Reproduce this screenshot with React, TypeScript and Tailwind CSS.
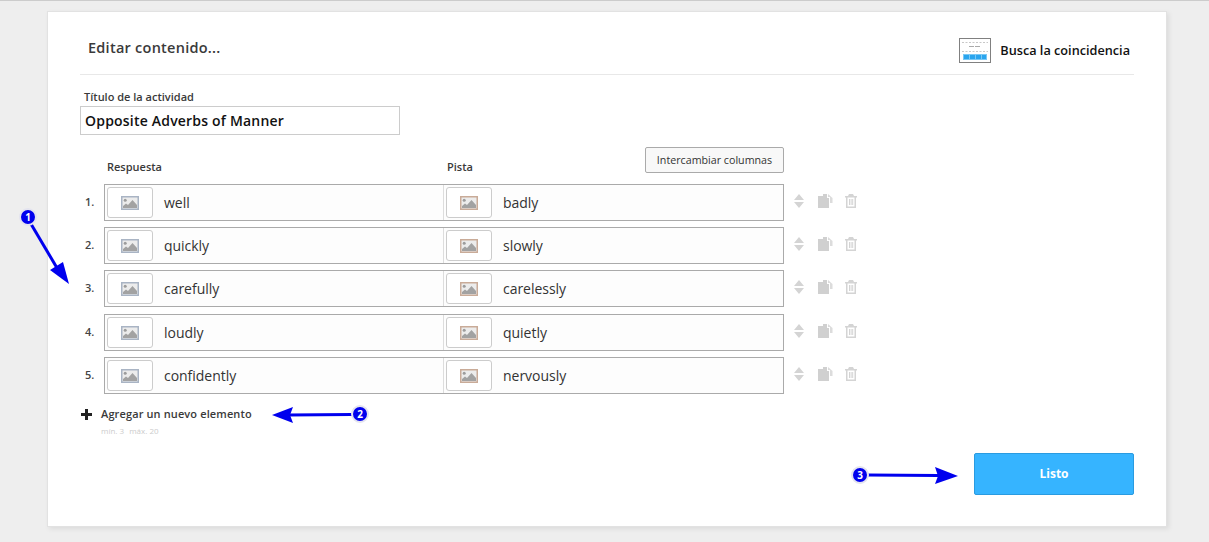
import React from 'react';

const rows = [
  { y: 'mb-[6px]', a: 'well', b: 'badly' },
  { y: 'mb-[6px]', a: 'quickly', b: 'slowly' },
  { y: 'mb-[7px]', a: 'carefully', b: 'carelessly' },
  { y: 'mb-[6px]', a: 'loudly', b: 'quietly' },
  { y: 'mb-0', a: 'confidently', b: 'nervously' },
];

function ImageIcon({ frame }: { frame: string }) {
  return (
    <svg width="18" height="14" viewBox="0 0 18 14">
      <rect x="0.75" y="0.75" width="16.5" height="12.5" fill="#ececec" stroke={frame} strokeWidth="1.5" />
      <circle cx="4.2" cy="4.2" r="1.5" fill="#9c9c9c" />
      <path d="M2 12 L2 10 L5 7.5 L7 9 L11.5 4 L16 9 L16 12 Z" fill="#a2a2a2" />
    </svg>
  );
}

function Thumb({ frame }: { frame: string }) {
  return (
    <div className="w-[46px] h-[31px] shrink-0 flex items-center justify-center bg-white border border-[#cccccc] rounded-[3px]">
      <ImageIcon frame={frame} />
    </div>
  );
}

function RowTools() {
  return (
    <div className="flex items-center ml-[10px] -mt-[3px]">
      <svg width="10" height="14" viewBox="0 0 10 14" className="mr-[14px]">
        <path d="M5 0 L10 6 L0 6 Z M0 8 L10 8 L5 14 Z" fill="#d4d4d4" />
      </svg>
      <svg width="15" height="14" viewBox="0 0 15 14" className="mr-[12px]">
        <path d="M0 2 H5 V0 H9 V4 H11 V14 H0 Z" fill="#d0d0d0" />
        <path d="M10 0 L14.5 4 V9 H12 V3 H10 Z" fill="#dcdcdc" />
      </svg>
      <svg width="12" height="14" viewBox="0 0 12 14">
        <path
          d="M4 0 H8 L9 2 H12 V3.5 H11 V14 H1 V3.5 H0 V2 H3 Z M2.5 3.5 V12.5 H9.5 V3.5 Z M4 5 H5 V11 H4 Z M5.6 5 H6.6 V11 H5.6 Z M7.2 5 H8.2 V11 H7.2 Z"
          fill="#d4d4d4"
          fillRule="evenodd"
        />
      </svg>
    </div>
  );
}

function ActivityLogo() {
  return (
    <svg width="32" height="25" viewBox="0 0 32 25" className="-mt-[2px]">
      <rect x="0.5" y="0.5" width="31" height="24" fill="#ffffff" stroke="#808080" />
      <path d="M3 4.5 H29 M3 13.5 H29" stroke="#c8c8c8" strokeDasharray="2 1.5" />
      <path d="M10 8.5 H22" stroke="#aaaaaa" strokeDasharray="5 1" />
      <rect x="4" y="16" width="24" height="6" fill="#7ac8f5" />
      <rect x="5" y="17" width="5" height="4" fill="#2aa5ee" />
      <rect x="11" y="17" width="5" height="4" fill="#2aa5ee" />
      <rect x="17" y="17" width="5" height="4" fill="#2aa5ee" />
      <rect x="23" y="17" width="4" height="4" fill="#2aa5ee" />
    </svg>
  );
}

function Badge({ n, className }: { n: number; className: string }) {
  return (
    <div
      className={`absolute w-[18px] h-[18px] rounded-full bg-[#0000ee] border-2 border-[#e4e4ef] flex items-center justify-center text-white text-[10px] font-bold leading-none ${className}`}
    >
      {n}
    </div>
  );
}

export default function App() {
  return (
    <div
      className="relative w-[1209px] h-[542px] overflow-hidden bg-[#eeeeee] border-t border-[#cccccc] pt-[10px] pl-[47px] text-[#222222]"
      style={{ fontFamily: '"Open Sans", "Noto Sans", sans-serif' }}
    >
      <div className="w-[1120px] h-[516px] bg-white border border-[#e2e2e2] shadow-[2px_2px_5px_rgba(0,0,0,0.08)] pl-[32px] pr-[32px]">
        {/* cabecera */}
        <div className="h-[63px] pt-[9px] border-b border-[#e8e8e8] flex items-center justify-between">
          <h1 className="ml-[8px] text-[14.5px] font-semibold text-[#3a3a3a] tracking-[0.25px]">Editar contenido...</h1>
          <div className="flex items-center mt-[7px] mr-[4px]">
            <ActivityLogo />
            <span className="ml-[9px] text-[12.7px] font-semibold text-[#111111]">Busca la coincidencia</span>
          </div>
        </div>

        {/* título */}
        <label className="block mt-[14px] ml-[4px] text-[11px] leading-[15px] font-semibold text-[#3a3a3a]">Título de la actividad</label>
        <div className="mt-[2px] w-[320px] h-[29px] border border-[#cccccc] flex items-center pl-[4px] text-[14px] font-semibold text-[#111111] tracking-[0.2px]">
          Opposite Adverbs of Manner
        </div>

        {/* encabezados de columna */}
        <div className="relative w-[704px] h-[49px]">
          <span className="absolute left-[27px] top-[24px] text-[11px] leading-[15px] font-semibold text-[#3a3a3a]">Respuesta</span>
          <span className="absolute left-[367px] top-[24px] text-[11px] leading-[15px] font-semibold text-[#3a3a3a]">Pista</span>
          <button className="absolute right-0 top-[12px] w-[139px] h-[26px] bg-[#f8f8f8] border border-[#aaaaaa] rounded-[2px] text-[10.7px] text-[#333333]">
            Intercambiar columnas
          </button>
        </div>

        {/* filas */}
        <div>
          {rows.map((r, i) => (
            <div key={r.a} className={`flex items-center h-[37px] ${r.y}`}>
              <span className="w-[24px] pl-[5px] text-[11px] font-semibold text-[#444444]">{i + 1}.</span>
              <div className="w-[680px] h-full border border-[#aaaaaa] bg-[#fdfdfd] flex items-center pl-[2px]">
                <div className="w-[337px] h-full flex items-center border-r border-[#dddddd]">
                  <Thumb frame="#a9b4c4" />
                  <span className="ml-[11px] text-[14px] tracking-[-0.03px] text-[#333333]">{r.a}</span>
                </div>
                <div className="flex items-center ml-[2px]">
                  <Thumb frame="#c9ab98" />
                  <span className="ml-[11px] text-[14px] tracking-[-0.03px] text-[#333333]">{r.b}</span>
                </div>
              </div>
              <RowTools />
            </div>
          ))}
        </div>

        {/* agregar */}
        <div className="flex items-center mt-[12px] h-[17px]">
          <svg width="11" height="11" viewBox="0 0 11 11" className="ml-[1px]">
            <path d="M4 0 H7 V4 H11 V7 H7 V11 H4 V7 H0 V4 H4 Z" fill="#222222" />
          </svg>
          <span className="ml-[9px] text-[11px] font-semibold text-[#3a3a3a] tracking-[0.12px]">Agregar un nuevo elemento</span>
        </div>
        <div className="ml-[21px] mt-[2px] text-[8px] leading-[11px] text-[#cccccc]">
          mín. 3 <span className="ml-[3px]">máx. 20</span>
        </div>

        {/* listo */}
        <div className="flex justify-end mt-[17px]">
          <button className="w-[160px] h-[42px] bg-[#36b4ff] border border-[#2a9be0] rounded-[2px] text-white text-[12px] font-bold">
            Listo
          </button>
        </div>
      </div>

      {/* anotaciones sobre la captura */}
      <svg className="absolute left-0 top-[-1px] pointer-events-none" width="1209" height="542">
        <path d="M31 224 L60 273" stroke="#0000ee" strokeWidth="3" />
        <path d="M69 284 L50 270 L63 262 Z" fill="#0000ee" />
        <path d="M288 415 L352 414.5" stroke="#0000ee" strokeWidth="3" />
        <path d="M272 415 L293 407 L290 415 L293 423 Z" fill="#0000ee" />
        <path d="M868 475 L938 475.5" stroke="#0000ee" strokeWidth="3" />
        <path d="M958 476 L935 467 L938 476 L935 484 Z" fill="#0000ee" />
      </svg>
      <Badge n={1} className="left-[19px] top-[207px]" />
      <Badge n={2} className="left-[351px] top-[404px]" />
      <Badge n={3} className="left-[851px] top-[465px]" />
    </div>
  );
}
